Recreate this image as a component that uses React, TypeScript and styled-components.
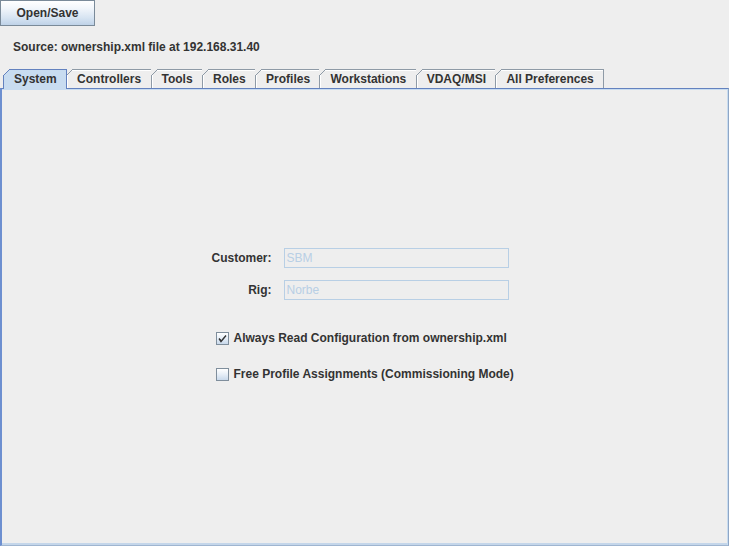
import styled, { createGlobalStyle } from 'styled-components';

const GlobalStyle = createGlobalStyle`
  html, body {
    margin: 0;
    padding: 0;
    background: #eeeeee;
  }
  body {
    font-family: 'Liberation Sans', Arial, sans-serif;
    font-size: 12px;
    color: #333333;
  }
`;

const Frame = styled.div`
  width: 729px;
  height: 546px;
  display: flex;
  flex-direction: column;
  background: #eeeeee;
  font-weight: bold;
`;

const Toolbar = styled.div`
  display: flex;
  height: 26px;
`;

const PushButton = styled.button`
  width: 95px;
  height: 26px;
  margin: 0;
  padding: 0;
  border: 1px solid #7a8a99;
  background: linear-gradient(to bottom, #ffffff 0%, #f2f6fb 30%, #d7e4f2 70%, #bfd2e8 100%);
  font: bold 12px 'Liberation Sans', Arial, sans-serif;
  color: #333333;
`;

const SourceLine = styled.div`
  height: 40px;
  line-height: 42px;
  padding-left: 13px;
`;

const TabStrip = styled.div`
  display: flex;
  align-items: flex-end;
  height: 22px;
  padding-left: 3px;
`;

const Tab = styled.div<{ $selected?: boolean; $last?: boolean }>`
  position: relative;
  height: 19px;
  box-sizing: border-box;
  padding: 0 9.4px 0 10px;
  line-height: 18px;
  white-space: nowrap;
  border-top: 1px solid ${(p) => (p.$selected ? '#6382bf' : '#8e9aa6')};
  border-left: 1px solid ${(p) => (p.$selected ? '#6382bf' : '#8e9aa6')};
  border-right: ${(p) => (p.$last || p.$selected ? '1px solid' : '0 solid')}
    ${(p) => (p.$selected ? '#6382bf' : '#8e9aa6')};
  background: ${(p) => (p.$selected ? '#c8dcf0' : '#eeeeee')};
  box-shadow: ${(p) => (p.$selected ? 'none' : 'inset 1px 1px 0 #ffffff')};
  ${(p) => (p.$selected ? 'height: 20px; margin-bottom: -1px; z-index: 1; margin-right: -1px;' : '')}

  &::before {
    content: '';
    position: absolute;
    top: -1px;
    left: -1px;
    width: 7px;
    height: 7px;
    background: linear-gradient(
      to bottom right,
      #eeeeee 0 calc(50% - 0.6px),
      ${(p) => (p.$selected ? '#6382bf' : '#8e9aa6')} calc(50% - 0.6px) calc(50% + 0.6px),
      transparent calc(50% + 0.6px)
    );
  }
`;

const Panel = styled.div`
  flex: 1;
  display: flex;
  align-items: center;
  justify-content: center;
  border-top: 1px solid #6382bf;
  border-left: 2px solid #6d8fd0;
  border-right: 1px solid #8ea6c6;
  border-bottom: 1px solid #9fb5d0;
  box-shadow: inset 0 1px 0 #c8dcf0, inset -1px 0 0 #c8dcf0, inset 0 -2px 0 #c4d6ea;
`;

const Form = styled.div`
  display: grid;
  grid-template-columns: auto 225px;
  column-gap: 12px;
  row-gap: 12px;
  align-items: center;
  margin: -2px 10px 0 0;
`;

const FieldLabel = styled.div`
  text-align: right;
  white-space: nowrap;
`;

const TextField = styled.div`
  height: 20px;
  box-sizing: border-box;
  border: 1px solid #b8cfe5;
  padding-left: 2px;
  line-height: 18px;
  font-weight: normal;
  color: #b8cfe5;
`;

const CheckRow = styled.label<{ $top: number }>`
  grid-column: 1 / -1;
  display: flex;
  align-items: center;
  gap: 4px;
  height: 20px;
  margin-left: 5px;
  margin-right: -30px;
  margin-top: ${(p) => p.$top}px;
  white-space: nowrap;
`;

const Box = styled.span`
  width: 13px;
  height: 13px;
  box-sizing: border-box;
  border: 1px solid #7f8e9c;
  background: linear-gradient(to bottom, #ffffff 0%, #e6eef7 50%, #c9d9eb 100%);
  display: flex;
  align-items: center;
  justify-content: center;
`;

const tabs = ['System', 'Controllers', 'Tools', 'Roles', 'Profiles', 'Workstations', 'VDAQ/MSI', 'All Preferences'];

const CheckBox = ({ checked, label, top }: { checked?: boolean; label: string; top: number }) => (
  <CheckRow $top={top}>
    <Box>
      {checked && (
        <svg width='11' height='11' viewBox='0 0 11 11'>
          <path d='M2 5.5 L4 8.5 L9 2.5' fill='none' stroke='#333333' strokeWidth='1.4' />
          <path d='M2.5 5.5 L4 8 L4 6.5 Z' fill='#333333' />
        </svg>
      )}
    </Box>
    {label}
  </CheckRow>
);

const App = () => {
  return (
    <>
      <GlobalStyle />
      <Frame>
        <Toolbar>
          <PushButton>Open/Save</PushButton>
        </Toolbar>
        <SourceLine>Source: ownership.xml file at 192.168.31.40</SourceLine>
        <TabStrip>
          {tabs.map((t, i) => (
            <Tab key={t} $selected={i === 0} $last={i === tabs.length - 1}>
              {t}
            </Tab>
          ))}
        </TabStrip>
        <Panel>
          <Form>
            <FieldLabel>Customer:</FieldLabel>
            <TextField>SBM</TextField>
            <FieldLabel>Rig:</FieldLabel>
            <TextField>Norbe</TextField>
            <CheckBox checked label='Always Read Configuration from ownership.xml' top={16} />
            <CheckBox label='Free Profile Assignments (Commissioning Mode)' top={4} />
          </Form>
        </Panel>
      </Frame>
    </>
  );
};

export default App;
